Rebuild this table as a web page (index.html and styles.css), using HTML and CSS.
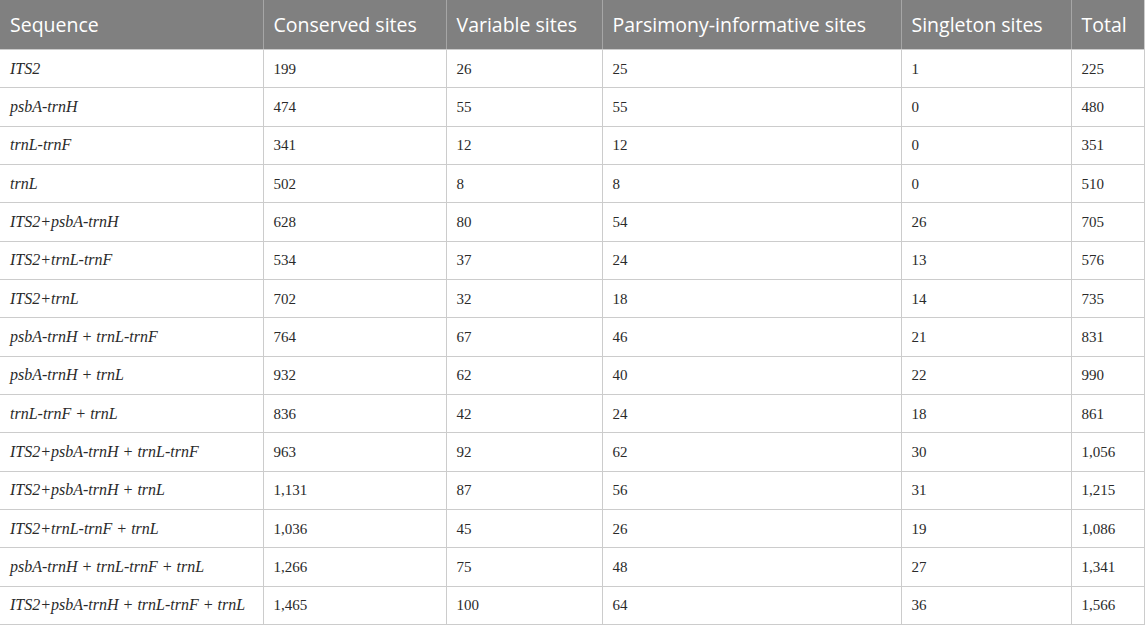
FILE: index.html
```html
<!DOCTYPE html>
<html>
<head>
<meta charset="utf-8">
<link rel="stylesheet" href="styles.css">
</head>
<body>
<table class="data">
<colgroup>
<col class="c1"><col class="c2"><col class="c3"><col class="c4"><col class="c5"><col class="c6">
</colgroup>
<thead>
<tr><th>Sequence</th><th>Conserved sites</th><th>Variable sites</th><th>Parsimony-informative sites</th><th>Singleton sites</th><th>Total</th></tr>
</thead>
<tbody>
<tr><td><i>ITS2</i></td><td>199</td><td>26</td><td>25</td><td>1</td><td>225</td></tr>
<tr><td><i>psbA-trnH</i></td><td>474</td><td>55</td><td>55</td><td>0</td><td>480</td></tr>
<tr><td><i>trnL-trnF</i></td><td>341</td><td>12</td><td>12</td><td>0</td><td>351</td></tr>
<tr><td><i>trnL</i></td><td>502</td><td>8</td><td>8</td><td>0</td><td>510</td></tr>
<tr><td><i>ITS2+psbA-trnH</i></td><td>628</td><td>80</td><td>54</td><td>26</td><td>705</td></tr>
<tr><td><i>ITS2+trnL-trnF</i></td><td>534</td><td>37</td><td>24</td><td>13</td><td>576</td></tr>
<tr><td><i>ITS2+trnL</i></td><td>702</td><td>32</td><td>18</td><td>14</td><td>735</td></tr>
<tr><td><i>psbA-trnH + trnL-trnF</i></td><td>764</td><td>67</td><td>46</td><td>21</td><td>831</td></tr>
<tr><td><i>psbA-trnH + trnL</i></td><td>932</td><td>62</td><td>40</td><td>22</td><td>990</td></tr>
<tr><td><i>trnL-trnF + trnL</i></td><td>836</td><td>42</td><td>24</td><td>18</td><td>861</td></tr>
<tr><td><i>ITS2+psbA-trnH + trnL-trnF</i></td><td>963</td><td>92</td><td>62</td><td>30</td><td>1,056</td></tr>
<tr><td><i>ITS2+psbA-trnH + trnL</i></td><td>1,131</td><td>87</td><td>56</td><td>31</td><td>1,215</td></tr>
<tr><td><i>ITS2+trnL-trnF + trnL</i></td><td>1,036</td><td>45</td><td>26</td><td>19</td><td>1,086</td></tr>
<tr><td><i>psbA-trnH + trnL-trnF + trnL</i></td><td>1,266</td><td>75</td><td>48</td><td>27</td><td>1,341</td></tr>
<tr><td><i>ITS2+psbA-trnH + trnL-trnF + trnL</i></td><td>1,465</td><td>100</td><td>64</td><td>36</td><td>1,566</td></tr>
</tbody>
</table>
</body>
</html>
```
FILE: styles.css
```css
html, body {
  margin: 0;
  padding: 0;
  background: #ffffff;
}
.data {
  border-collapse: collapse;
  table-layout: fixed;
  width: 1144px;
}
.c1 { width: 263px; }
.c2 { width: 183px; }
.c3 { width: 156px; }
.c4 { width: 299px; }
.c5 { width: 170px; }
.c6 { width: 73px; }
.data th {
  background: #808080;
  color: #ffffff;
  font-family: "Open Sans", "Noto Sans", sans-serif;
  font-weight: 400;
  font-size: 19.5px;
  line-height: 24px;
  text-align: left;
  height: 49px;
  padding: 0 0 0 10px;
  border: 1px solid #cccccc;
  border-top: none;
  border-left: none;
  white-space: nowrap;
}
.data th:not(:last-child) { border-right: 1px solid #a6a6a6; }
.data td {
  font-family: "Liberation Serif", "Times New Roman", serif;
  font-size: 15px;
  line-height: 18px;
  color: #2a2a2a;
  height: 37.35px;
  padding: 0 0 0 10px;
  border: 1px solid #cccccc;
  text-align: left;
  white-space: nowrap;
}
.data td:first-child { border-left: none; }
.data td i {
  font-size: 16px;
  line-height: 18px;
}
```
